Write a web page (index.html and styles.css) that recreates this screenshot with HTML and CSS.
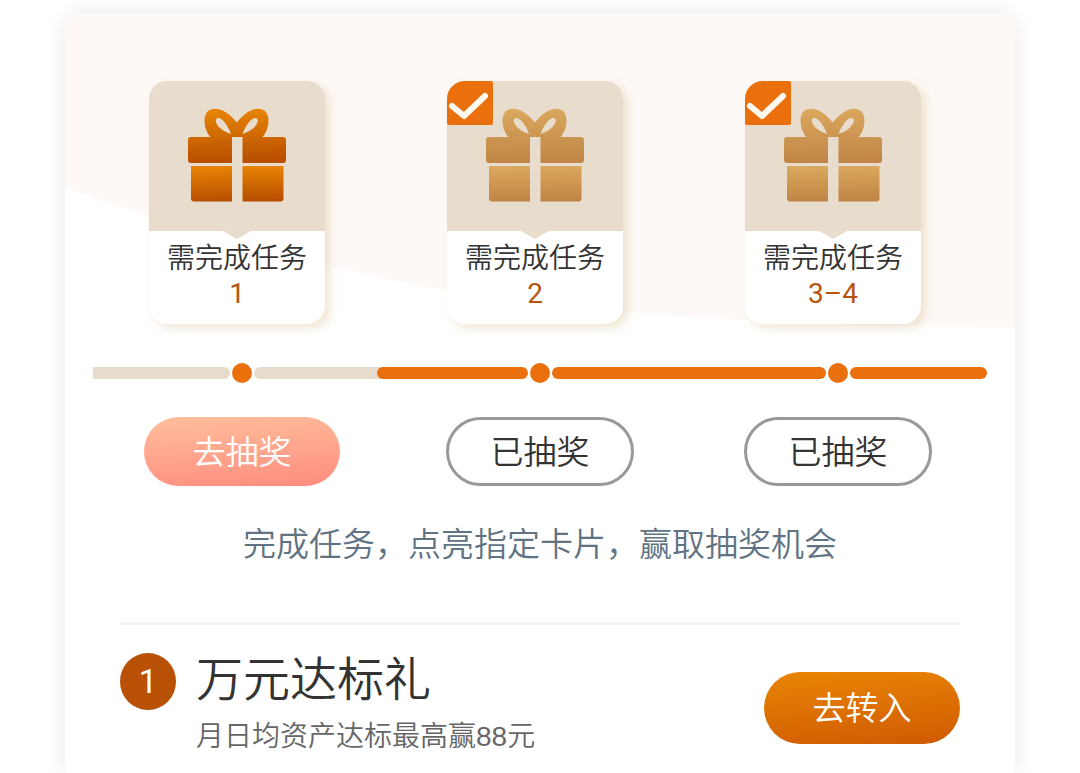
FILE: index.html
```
<!DOCTYPE html>
<html lang="zh-CN">
  <head>
    <meta charset="UTF-8" />
    <meta name="viewport" content="width=device-width, initial-scale=1.0" />
    <title>完成任务赢抽奖</title>
    <link rel="stylesheet" href="styles.css">
  </head>
  <body>
    <!-- shared gift icon -->
    <svg class="defs" width="0" height="0" aria-hidden="true">
      <defs>
        <linearGradient id="bright" x1="0" y1="0" x2="0.05" y2="1">
          <stop offset="0" stop-color="#e98604" />
          <stop offset="1" stop-color="#b74e00" />
        </linearGradient>
        <linearGradient id="muted" x1="0" y1="0" x2="0.05" y2="1">
          <stop offset="0" stop-color="#dba95f" />
          <stop offset="1" stop-color="#c08546" />
        </linearGradient>
        <symbol id="gift" viewBox="0 0 98 94">
          <path fill-rule="evenodd" d="M3 29H22.5C16 22 14.500 9 19.500 3.500C25 -1.500 34 0.500 41 6.500C45 10 47.500 13 48.700 14.500C50 13 52.500 10 56.500 6.500C63.500 0.500 72 -1.500 77.500 3.500C82.500 9 81 22 74.500 29H95Q98 29 98 32V52Q98 55 95 55H54.500V29H44V55H3Q0 55 0 52V32Q0 29 3 29ZM43 26C36.500 23.500 29.500 20 27.800 13.500C27 9.500 31 8.800 34.500 12C38.500 16 41 20.500 43 26ZM54.500 26C61 23.500 68 20 69.700 13.500C70.500 9.500 66.500 8.800 63 12C59 16 56.500 20.500 54.500 26Z" />
          <path d="M3 58H44V93.500H6Q3 93.500 3 90.500ZM54.500 58H95.500V90.500Q95.500 93.500 92.500 93.500H54.500Z" />
        </symbol>
      </defs>
    </svg>

    <main class="panel">
      <svg class="wave" viewBox="0 0 950 315" preserveAspectRatio="none" aria-hidden="true">
        <path d="M0 0H950V314C820 314 700 309 600 302C500 294 430 284 360 274C240 249 110 215 0 175Z" />
      </svg>

      <section class="steps">
        <div class="card">
          <div class="card-top">
            <svg class="gift gift-bright" aria-hidden="true"><use href="#gift" /></svg>
          </div>
          <p class="card-label">需完成任务</p>
          <p class="card-num">1</p>
        </div>
        <div class="card">
          <div class="card-top">
            <svg class="gift gift-muted" aria-hidden="true"><use href="#gift" /></svg>
          </div>
          <p class="card-label">需完成任务</p>
          <p class="card-num">2</p>
          <span class="tick">
            <svg viewBox="0 0 46 44" aria-hidden="true"><path d="M5 25L17 35L38 15" /></svg>
          </span>
        </div>
        <div class="card">
          <div class="card-top">
            <svg class="gift gift-muted" aria-hidden="true"><use href="#gift" /></svg>
          </div>
          <p class="card-label">需完成任务</p>
          <p class="card-num">3–4</p>
          <span class="tick">
            <svg viewBox="0 0 46 44" aria-hidden="true"><path d="M5 25L17 35L38 15" /></svg>
          </span>
        </div>
      </section>

      <div class="track">
        <div class="track-step">
          <span class="bar bar-before"></span>
          <span class="dot"></span>
          <span class="bar bar-after"></span>
        </div>
        <div class="track-step done">
          <span class="bar bar-before bar-start"></span>
          <span class="dot"></span>
          <span class="bar bar-after"></span>
        </div>
        <div class="track-step done">
          <span class="bar bar-before"></span>
          <span class="dot"></span>
          <span class="bar bar-after bar-end"></span>
        </div>
      </div>

      <div class="actions">
        <button type="button" class="btn btn-draw">去抽奖</button>
        <button type="button" class="btn btn-done">已抽奖</button>
        <button type="button" class="btn btn-done">已抽奖</button>
      </div>

      <p class="hint">完成任务，点亮指定卡片，赢取抽奖机会</p>

      <section class="task">
        <span class="task-num">1</span>
        <div class="task-text">
          <h2>万元达标礼</h2>
          <p>月日均资产达标最高赢88元</p>
        </div>
        <button type="button" class="btn btn-go">去转入</button>
      </section>
    </main>
  </body>
</html>
```
FILE: styles.css
```
* {
  box-sizing: border-box;
}
body {
  margin: 0;
  background-color: #fff;
  color: #333;
  font-family: "Liberation Sans", "Noto Sans CJK SC", sans-serif;
  font-weight: 350;
}
h2,
p {
  margin: 0;
  font-weight: 350;
}
.defs {
  position: absolute;
}
.panel {
  position: relative;
  display: flow-root;
  min-height: calc(100vh - 13px);
  margin: 13px 65px 0;
  padding: 68px 28px 0;
  background-color: #fff;
  border-radius: 16px 16px 0 0;
  box-shadow: 0 0 22px rgba(0, 0, 0, 0.09);
}
.wave {
  position: absolute;
  top: 0;
  left: 0;
  width: 100%;
  height: 315px;
  border-radius: 16px 16px 0 0;
  fill: #fef9f7;
}

/* cards */
.steps,
.track,
.actions {
  position: relative;
  display: grid;
  grid-template-columns: repeat(3, 1fr);
}
.steps {
  margin: 0 5px 0 -5px;
  justify-items: center;
}
.card {
  position: relative;
  width: 176px;
  height: 243px;
  background-color: #fff;
  border-radius: 18px;
  box-shadow: 5px 4px 10px rgba(226, 205, 168, 0.5);
  text-align: center;
}
.card-top {
  position: relative;
  height: 150px;
  padding-top: 27px;
  background-color: #e8dccc;
  border-radius: 18px 18px 0 0;
}
.card-top::after {
  content: "";
  position: absolute;
  top: 100%;
  left: 50%;
  margin-left: -14px;
  border: 14px solid transparent;
  border-top: 8px solid #e8dccc;
  border-bottom: 0;
}
.gift {
  width: 98px;
  height: 94px;
}
.gift-bright {
  fill: url(#bright);
}
.gift-muted {
  fill: url(#muted);
}
.card-label {
  position: relative;
  padding-top: 10px;
  font-size: 28px;
  line-height: 36px;
}
.card-num {
  color: #b65410;
  font-family: Roboto, sans-serif;
  font-size: 28px;
  font-weight: 400;
  line-height: 34px;
}
.tick {
  position: absolute;
  top: 0;
  left: 0;
  width: 46px;
  height: 44px;
  background-color: #e9700c;
  border-radius: 18px 2px 2px 2px;
}
.tick svg {
  display: block;
  fill: none;
  stroke: #fff8ee;
  stroke-width: 6;
  stroke-linecap: round;
  stroke-linejoin: round;
}

/* progress line */
.track {
  margin-top: 39px;
}
.track-step {
  display: grid;
  grid-template-columns: 1fr 20px 1fr;
  column-gap: 2px;
  align-items: center;
}
.bar {
  height: 12px;
  background-color: #e7dccb;
}
.dot {
  height: 20px;
  border-radius: 50%;
  background-color: #e9700c;
}
.done .bar {
  background-color: #e9700c;
}
.bar-before {
  border-radius: 0 6px 6px 0;
}
.bar-after {
  border-radius: 6px 0 0 6px;
}
.bar-start {
  margin-left: -14px;
  border-radius: 6px;
}
.bar-end {
  border-radius: 6px;
}

/* buttons */
.actions {
  margin-top: 34px;
  justify-items: center;
}
.btn {
  width: 196px;
  height: 69px;
  padding: 0 0 4px;
  border: none;
  border-radius: 36px;
  color: #fff;
  font-family: inherit;
  font-size: 33px;
  font-weight: 350;
  cursor: pointer;
}
.btn-draw {
  background: linear-gradient(175deg, #ffbf9b, #ff8c7f);
}
.btn-done {
  width: 188px;
  border: 3px solid #999;
  background-color: #fff;
  color: #333;
}
.btn-go {
  height: 72px;
  background: linear-gradient(175deg, #e98504, #d05a02);
}
.hint {
  margin-top: 39px;
  color: #5f7383;
  font-size: 33px;
  line-height: 40px;
  text-align: center;
}

/* task row */
.task {
  display: flex;
  align-items: flex-start;
  margin: 57px 27px 0;
  padding-top: 28px;
  border-top: 3px solid #f3f3f3;
}
.task-num {
  width: 56px;
  height: 57px;
  border-radius: 50%;
  background-color: #b85005;
  color: #fff;
  font-family: Roboto, sans-serif;
  font-size: 33px;
  font-weight: 400;
  line-height: 57px;
  text-align: center;
}
.task-text {
  flex: 1;
  margin-left: 20px;
}
.task-text h2 {
  font-size: 47px;
  line-height: 54px;
}
.task-text p {
  padding-top: 12px;
  color: #666;
  font-size: 28px;
  line-height: 36px;
}
.task .btn {
  margin-top: 19px;
}
```
